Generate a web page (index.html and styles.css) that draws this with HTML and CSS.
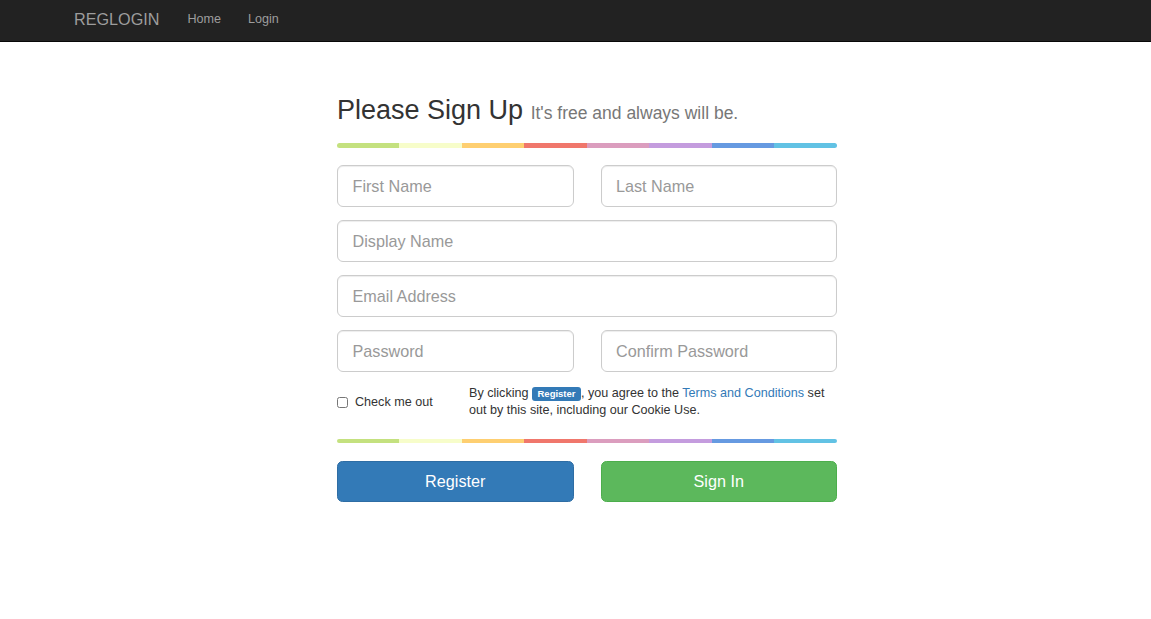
FILE: index.html
```
<!DOCTYPE html>
<html lang="en">
<head>
  <meta charset="UTF-8" />
  <title>RegLogin - Sign Up</title>
  <meta name="viewport" content="width=device-width, initial-scale=1.0" />
  <link rel="stylesheet" href="styles.css">
</head>
<body>

  <nav class="navbar">
    <a class="brand" href="#">REGLOGIN</a>
    <a class="nav-link" href="#">Home</a>
    <a class="nav-link" href="#">Login</a>
  </nav>

  <form class="signup">
    <h2 class="title">Please Sign Up <small>It's free and always will be.</small></h2>
    <div class="colorgraph top"></div>

    <div class="pair">
      <input class="field" type="text" placeholder="First Name">
      <input class="field" type="text" placeholder="Last Name">
    </div>
    <input class="field" type="text" placeholder="Display Name">
    <input class="field" type="email" placeholder="Email Address">
    <div class="pair">
      <input class="field" type="password" placeholder="Password">
      <input class="field" type="password" placeholder="Confirm Password">
    </div>

    <div class="agree">
      <label class="check"><input type="checkbox"> Check me out</label>
      <p class="terms">By clicking <span class="label">Register</span>, you agree to the <a href="#">Terms and Conditions</a> set out by this site, including our Cookie Use.</p>
    </div>

    <div class="colorgraph bottom"></div>

    <div class="pair">
      <button class="btn btn-primary" type="submit">Register</button>
      <button class="btn btn-success" type="button">Sign In</button>
    </div>
  </form>

</body>
</html>
```

FILE: styles.css
```
body {
  margin: 0;
  font-family: 'Liberation Sans', Arial, sans-serif;
  font-size: 12.6px;
  color: #333;
  background: #fff;
}

.navbar {
  display: flex;
  align-items: center;
  height: 41px;
  padding-left: 74px;
  background: #222;
  border-bottom: 1px solid #080808;
}

.navbar a {
  color: #9d9d9d;
  text-decoration: none;
}

.brand {
  font-size: 16.2px;
  margin-right: 28px;
  padding-bottom: 2px;
}

.nav-link {
  font-size: 12.6px;
  margin-right: 27px;
  padding-bottom: 4px;
}

.signup {
  width: 500px;
  margin-left: calc(50% - 238.5px);
  padding-top: 53px;
}

.title {
  margin: 0;
  font-size: 27px;
  font-weight: 500;
  line-height: 30px;
  color: #333;
}

.title small {
  font-size: 17.5px;
  line-height: 1;
  color: #777;
}

.colorgraph {
  height: 4.5px;
  border-radius: 5px;
  background-image: linear-gradient(to right,
    #c4e17f, #c4e17f 12.5%, #f7fdca 12.5%, #f7fdca 25%,
    #fecf71 25%, #fecf71 37.5%, #f0776c 37.5%, #f0776c 50%,
    #db9dbe 50%, #db9dbe 62.5%, #c49cde 62.5%, #c49cde 75%,
    #669ae1 75%, #669ae1 87.5%, #62c2e4 87.5%, #62c2e4);
}

.colorgraph.top {
  margin: 18px 0 17.5px;
}

.colorgraph.bottom {
  margin: 20px 0 17.5px;
}

.pair {
  display: grid;
  grid-template-columns: 1fr 1fr;
  column-gap: 27px;
}

.field {
  display: block;
  box-sizing: border-box;
  width: 100%;
  height: 41.5px;
  margin: 0 0 13.5px;
  padding: 2px 14.5px 0;
  font-family: inherit;
  font-size: 16.2px;
  color: #555;
  border: 1px solid #ccc;
  border-radius: 6px;
  box-shadow: inset 0 1px 1px rgba(0, 0, 0, 0.075);
}

.field::placeholder {
  color: #999;
}

.agree {
  display: grid;
  grid-template-columns: 132px 1fr;
  align-items: center;
  margin-top: -0.5px;
}

.check {
  display: flex;
  align-items: center;
  font-size: 12.6px;
  color: #333;
}

.check input {
  width: 11px;
  height: 11px;
  margin: 2px 7px 0 0;
}

.terms {
  margin: 0;
  font-size: 12.6px;
  line-height: 17px;
  color: #333;
}

.terms a {
  color: #337ab7;
  text-decoration: none;
}

.label {
  display: inline-block;
  padding: 2px 5.5px 2.5px;
  font-size: 9.5px;
  font-weight: bold;
  line-height: 1;
  vertical-align: 0;
  color: #fff;
  background: #337ab7;
  border-radius: 3px;
}

.btn {
  height: 41px;
  font-family: inherit;
  font-size: 16.2px;
  color: #fff;
  border: 1px solid transparent;
  border-radius: 5.5px;
  cursor: pointer;
}

.btn-primary {
  background: #337ab7;
  border-color: #2e6da4;
}

.btn-success {
  background: #5cb85c;
  border-color: #4cae4c;
}
```
